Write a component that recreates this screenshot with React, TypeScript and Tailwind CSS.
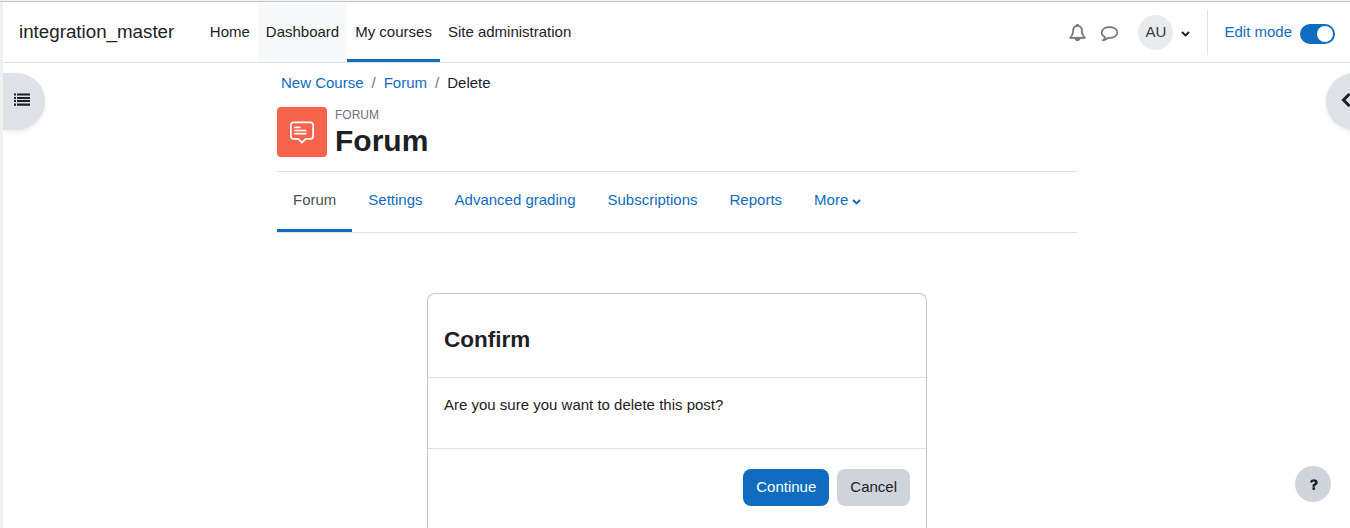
import React from "react";

const primaryNav = [
  { label: "Home", className: "" },
  { label: "Dashboard", className: "bg-[#f8f9fa]" },
  { label: "My courses", className: "border-b-[#0f6cbf]" },
  { label: "Site administration", className: "" },
];

const tabs = ["Settings", "Advanced grading", "Subscriptions", "Reports"];

// --- ICONS ---
function Icon({ d, className }: { d: string; className: string }) {
  return (
    <svg viewBox="0 0 1792 1792" fill="currentColor" className={className}>
      <path d={d} />
    </svg>
  );
}

const BELL =
  "M912 1696q0-16-16-16-59 0-101.5-42.5t-42.5-101.5q0-16-16-16t-16 16q0 73 51.5 124.5t124.5 51.5q16 0 16-16zm-666-288h1300q-266-300-266-832 0-51-24-105t-69-103-121.5-80.5-169.5-31.5-169.5 31.5-121.5 80.5-69 103-24 105q0 532-266 832zm1482 0q0 52-38 90t-90 38h-448q0 106-75 181t-181 75-181-75-75-181h-448q-52 0-90-38t-38-90q50-42 91-88t85-119.5 74.5-158.5 50-206 19.5-260q0-152 117-282.5t307-158.5q-8-19-8-39 0-40 28-68t68-28 68 28 28 68q0 20-8 39 190 28 307 158.5t117 282.5q0 139 19.5 260t50 206 74.5 158.5 85 119.5 91 88z";
const COMMENT =
  "M896 384q-204 0-381.5 69.5t-282 187.5-104.5 255q0 112 71.5 213.5t201.5 175.5l87 50-27 96q-24 91-70 172 152-63 275-171l43-38 57 6q69 8 130 8 204 0 381.5-69.5t282-187.5 104.5-255-104.5-255-282-187.5-381.5-69.5zm896 512q0 174-120 321.5t-326 233-450 85.5q-70 0-145-8-198 175-460 242-49 14-114 22h-5q-15 0-27-10.5t-16-27.5v-1q-3-4-.5-12t2-10 4.5-9.5l6-9 7-8.5 8-9q7-8 31-34.5t34.5-38 31-39.5 32.5-51 27-59 26-76q-157-89-247.5-220t-90.5-281q0-174 120-321.5t326-233 450-85.5 450 85.5 326 233 120 321.5z";
const QUESTION =
  "M1088 1256v240q0 16-12 28t-28 12h-240q-16 0-28-12t-12-28v-240q0-16 12-28t28-12h240q16 0 28 12t12 28zm316-600q0 54-15.5 101t-35 76.5-55 59.5-57.5 43.5-61 35.5q-41 23-68.5 65t-27.5 67q0 17-12 32.5t-28 15.5h-240q-15 0-25.5-18.5t-10.5-37.5v-45q0-83 65-156.5t143-108.5q59-27 84-56t25-76q0-42-46.5-74t-107.5-32q-65 0-108 29-35 25-107 115-13 16-31 16-12 0-25-8l-164-125q-13-10-15.5-25t5.5-28q160-266 464-266 80 0 161 31t146 83 106 127.5 41 158.5z";

function Caret({ className }: { className: string }) {
  return (
    <svg viewBox="0 0 9 6" fill="none" stroke="currentColor" strokeWidth="2" className={className}>
      <path d="M1 1l3.5 3.4L8 1" />
    </svg>
  );
}

function ListIcon() {
  return (
    <svg viewBox="0 0 16 13" fill="currentColor" className="h-[13px] w-4">
      <path d="M0 .4h2v2.200H0zM3 .4h13v2.200H3zM0 4h2v2H0zM3 4h13v2H3zM0 7h2v2H0zM3 7h13v2H3zM0 10.500h2v2.200H0zM3 10.500h13v2.200H3z" />
    </svg>
  );
}

function ForumIcon() {
  return (
    <svg
      viewBox="0 0 24 24"
      fill="none"
      stroke="currentColor"
      strokeWidth="1.7"
      strokeLinecap="round"
      strokeLinejoin="round"
      className="size-6 text-white"
    >
      <path d="M3.500 2.300h17a2.600 2.600 0 0 1 2.600 2.600v11.300a2.600 2.600 0 0 1-2.600 2.600h-4.700L12 22.700l-3.800-3.900H3.500a2.600 2.600 0 0 1-2.600-2.600V4.900a2.600 2.600 0 0 1 2.600-2.600z" />
      <path d="M4.800 7.300h5M4.800 10.500h11M4.800 13.600h11" />
    </svg>
  );
}

// --- TOP BAR ---
function Navbar() {
  return (
    <nav className="flex h-[61px] items-stretch border-b border-[#dee2e6] bg-white pl-4 pr-[15px]">
      <a className="mr-[27.5px] flex items-center text-[18.75px]">integration_master</a>
      <ul className="flex">
        {primaryNav.map((item) => (
          <li
            key={item.label}
            className={`flex items-center border-y-[3px] border-transparent px-2 ${item.className}`}
          >
            {item.label}
          </li>
        ))}
      </ul>
      <div className="ml-auto flex items-center">
        <Icon d={BELL} className="size-[17px] stroke-current stroke-[70] text-[#6a737b]" />
        <Icon d={COMMENT} className="ml-[15px] size-[17px] stroke-current stroke-[60] text-[#6a737b]" />
        <span className="ml-5 flex size-[35px] items-center justify-center rounded-full bg-[#e9ecef] text-[#343a40]">
          AU
        </span>
        <Caret className="ml-2 mt-[3px] h-1.5 w-[9px]" />
        <div className="ml-[17px] flex h-[45px] items-center border-l border-[#dee2e6] pl-4">
          <span className="text-[#0f6cbf]">Edit mode</span>
          <span className="ml-2 mt-[3px] flex h-5 w-[35px] items-center justify-end rounded-full bg-[#0f6cbf] pr-0.5">
            <span className="size-4 rounded-full bg-white" />
          </span>
        </div>
      </div>
    </nav>
  );
}

// --- COURSE HEADER ---
function PageHeader() {
  return (
    <header className="border-b border-[#dee2e6] pb-3">
      <ol className="flex gap-2 pl-1 pt-[9px] leading-[22px]">
        <li className="text-[#0f6cbf]">New Course</li>
        <li className="text-[#6a737b]">/</li>
        <li className="text-[#0f6cbf]">Forum</li>
        <li className="text-[#6a737b]">/</li>
        <li>Delete</li>
      </ol>
      <div className="mt-[13px] flex gap-2">
        <div className="flex size-[50px] items-center justify-center rounded bg-[#f7634d]">
          <ForumIcon />
        </div>
        <div>
          <div className="text-xs leading-4 text-[#6a737b]">FORUM</div>
          <h1 className="text-[30px] font-bold leading-9">Forum</h1>
        </div>
      </div>
    </header>
  );
}

function SecondaryNav() {
  return (
    <ul className="flex h-[61px] border-b border-[#dee2e6] text-[#0f6cbf]">
      <li className="flex items-center border-y-[3px] border-transparent border-b-[#0f6cbf] px-4 pb-[3px] text-[#495057]">
        Forum
      </li>
      {tabs.map((tab) => (
        <li key={tab} className="flex items-center px-4 pb-[3px]">
          {tab}
        </li>
      ))}
      <li className="flex items-center px-4 pb-[3px]">
        More
        <Caret className="ml-1 mt-[3px] h-1.5 w-[9px]" />
      </li>
    </ul>
  );
}

function ConfirmBox() {
  return (
    <div className="mx-auto mt-[60px] h-[260px] w-[500px] rounded-t-lg border border-b-0 border-[#c8c8c8]">
      <div className="flex h-[84px] items-center border-b border-[#dee2e6] px-4 pt-2">
        <h4 className="text-[22.5px] font-bold">Confirm</h4>
      </div>
      <div className="h-[71px] border-b border-[#dee2e6] px-4 pt-4">
        <p className="leading-[22px]">Are you sure you want to delete this post?</p>
      </div>
      <div className="flex justify-end gap-2 px-4 pt-5">
        <button className="h-[37px] rounded-lg bg-[#0f6cbf] px-[13px] text-white">Continue</button>
        <button className="h-[37px] rounded-lg bg-[#ced4da] px-[13px]">Cancel</button>
      </div>
    </div>
  );
}

export default function App() {
  return (
    <div className="h-[528px] overflow-hidden bg-[#f0f0f0] pt-px font-['Liberation_Sans',Arial,sans-serif] text-[15px] text-[#1d2125]">
      <div className="h-px bg-[#c8c8c8]" />
      <div className="relative ml-[3px] h-[526px] overflow-hidden bg-white">
        <Navbar />
        <main className="ml-[274px] w-[800px]">
          <PageHeader />
          <SecondaryNav />
          <ConfirmBox />
        </main>

        {/* drawer toggles and help button float above the page */}
        <button className="absolute left-0 top-[71px] flex h-[57px] w-[42px] items-center rounded-r-full bg-[#dee2e6] pb-1 pl-[11px] shadow-[0_2px_4px_rgba(0,0,0,0.08)]">
          <ListIcon />
        </button>
        <button className="absolute -right-[33px] top-[71px] flex size-[57px] items-center rounded-full bg-[#dee2e6] pb-[3px] pl-[15px] shadow-[0_2px_4px_rgba(0,0,0,0.08)]">
          <svg viewBox="0 0 10 14" fill="none" stroke="currentColor" strokeWidth="3" className="h-3.5 w-2.5 shrink-0">
            <path d="M8.500 1L2.500 7l6 6" />
          </svg>
        </button>
        <button className="absolute right-[19px] top-[464px] flex size-9 items-center justify-center rounded-full bg-[#ced4da]">
          <Icon d={QUESTION} className="size-[15px]" />
        </button>
      </div>
    </div>
  );
}
